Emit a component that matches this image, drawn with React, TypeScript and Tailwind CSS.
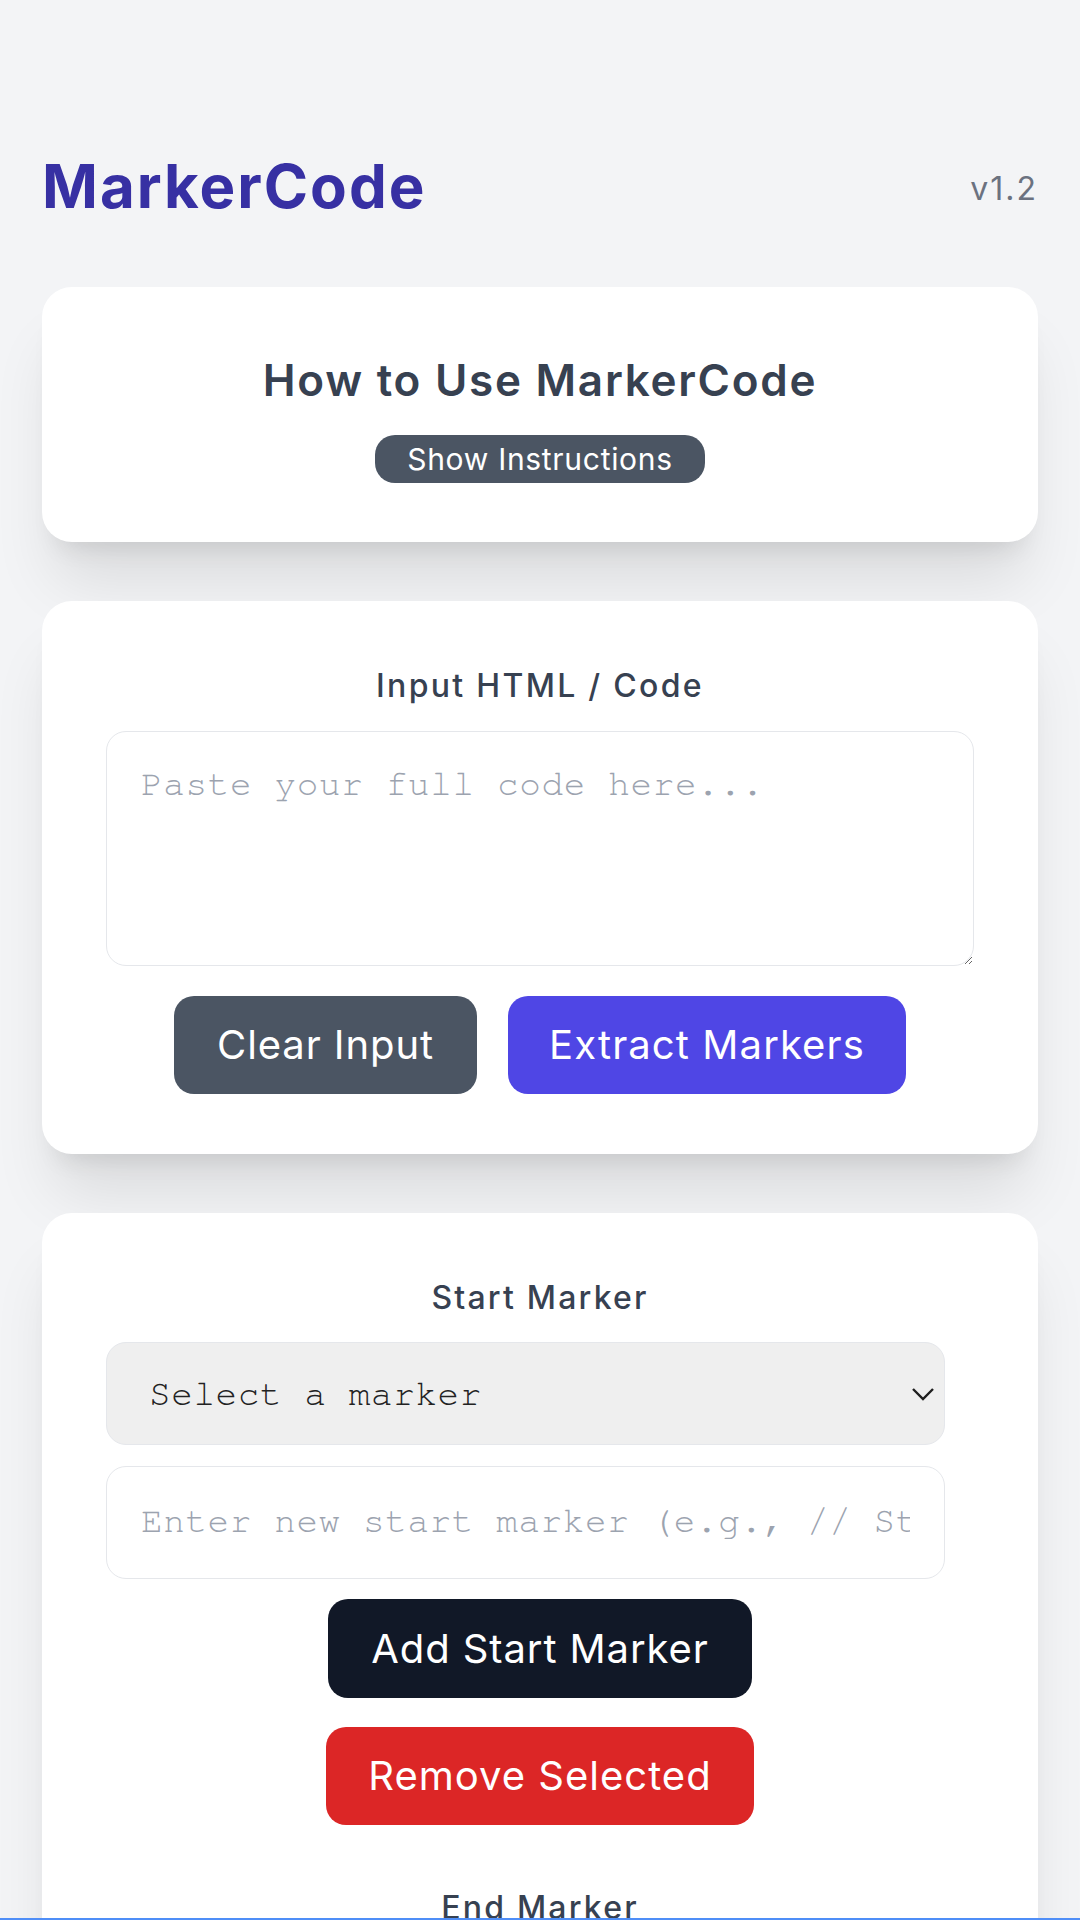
import React from "react";

const cardClass =
  "bg-white rounded-[30px] shadow-[0_50px_62px_-12px_rgba(0,0,0,0.1),0_20px_25px_-15px_rgba(0,0,0,0.1)]";

const mono =
  "font-['Nimbus_Mono_PS','FreeMono','Courier_New','Liberation_Mono',monospace]";

const Chevron = () => (
  <svg
    width="24"
    height="14"
    viewBox="0 0 24 14"
    fill="none"
    stroke="#1f1f1f"
    strokeWidth="2.4"
    className="pointer-events-none absolute right-[10px] top-1/2 -translate-y-1/2"
  >
    <polyline points="2,2 12,12 22,2" />
  </svg>
);

const MarkerSection = ({
  label,
  placeholder,
  addText,
}: {
  label: string;
  placeholder: string;
  addText: string;
}) => (
  <div className="flex flex-col items-center">
    <h3 className="text-[32px] leading-[50px] font-medium tracking-[2.2px] text-[#374151] mb-[19px]">
      {label}
    </h3>
    <div className="relative w-[839px] self-start">
      <select
        defaultValue=""
        className={`appearance-none w-full h-[103px] pl-[42px] pr-[60px] rounded-[20px] border border-[#e5e7eb] bg-[#efefef] text-[36px] tracking-[0.6px] text-[#222] outline-none ${mono}`}
      >
        <option value="">Select a marker</option>
      </select>
      <Chevron />
    </div>
    <input
      placeholder={placeholder}
      className={`mt-[21px] self-start w-[839px] h-[113px] px-[34px] pb-[4px] rounded-[20px] border border-[#e5e7eb] bg-white text-[36px] tracking-[0.6px] placeholder:text-[#9ca3af] outline-none ${mono}`}
    />
    <button className="mt-[20px] w-[424px] h-[99px] rounded-[20px] bg-[#111827] text-white text-[40px] tracking-[0.9px]">
      {addText}
    </button>
    <button className="mt-[29px] w-[428px] h-[98px] rounded-[20px] bg-[#dc2626] text-white text-[40px] tracking-[1px]">
      Remove Selected
    </button>
  </div>
);

export default function App() {
  return (
    <div className="min-h-screen bg-[#f3f4f6] font-['Inter',sans-serif]">
      <div className="px-[42px] pt-[156px] pb-[60px]">
        <header className="flex items-center justify-between mb-[71px]">
          <h1 className="text-[60px] leading-[60px] font-bold tracking-[2px] text-[#3730a3]">
            MarkerCode
          </h1>
          <span className="mt-[5px] text-[32px] leading-[40px] tracking-[2px] text-[#6b7280]">
            v1.2
          </span>
        </header>

        <div className="flex flex-col gap-[59px]">
          <section className={`${cardClass} pt-[60px] pb-[59px] flex flex-col items-center`}>
            <h2 className="text-[44px] leading-[66px] font-semibold tracking-[1.75px] text-[#374151] mb-[22px]">
              How to Use MarkerCode
            </h2>
            <button className="w-[330px] h-[48px] rounded-[20px] bg-[#4b5563] text-white text-[30px] leading-[40px] tracking-[0.7px]">
              Show Instructions
            </button>
          </section>

          <section className={`${cardClass} px-[64px] pt-[60px] pb-[60px] flex flex-col items-center`}>
            <h3 className="text-[32px] leading-[50px] font-medium tracking-[2.3px] text-[#374151] mb-[20px]">
              Input HTML / Code
            </h3>
            <textarea
              placeholder="Paste your full code here..."
              className={`w-full h-[235px] px-[34px] pt-[25px] rounded-[20px] border border-[#e5e7eb] bg-white text-[36px] leading-[54px] tracking-[0.65px] placeholder:text-[#9ca3af] outline-none ${mono}`}
            />
            <div className="mt-[30px] flex gap-[31px]">
              <button className="w-[303px] h-[98px] rounded-[20px] bg-[#4b5563] text-white text-[40px] tracking-[0.9px]">
                Clear Input
              </button>
              <button className="w-[398px] h-[98px] rounded-[20px] bg-[#4f46e5] text-white text-[40px] tracking-[1.1px]">
                Extract Markers
              </button>
            </div>
          </section>

          <section className={`${cardClass} px-[64px] pt-[60px] pb-[60px] flex flex-col gap-[58px]`}>
            <MarkerSection
              label="Start Marker"
              placeholder="Enter new start marker (e.g., // Start)"
              addText="Add Start Marker"
            />
            <MarkerSection
              label="End Marker"
              placeholder="Enter new end marker (e.g., // End)"
              addText="Add End Marker"
            />
          </section>
        </div>
      </div>
      <div className="fixed bottom-0 left-0 right-0 h-[2px] bg-[#4f8ef7]" />
    </div>
  );
}
